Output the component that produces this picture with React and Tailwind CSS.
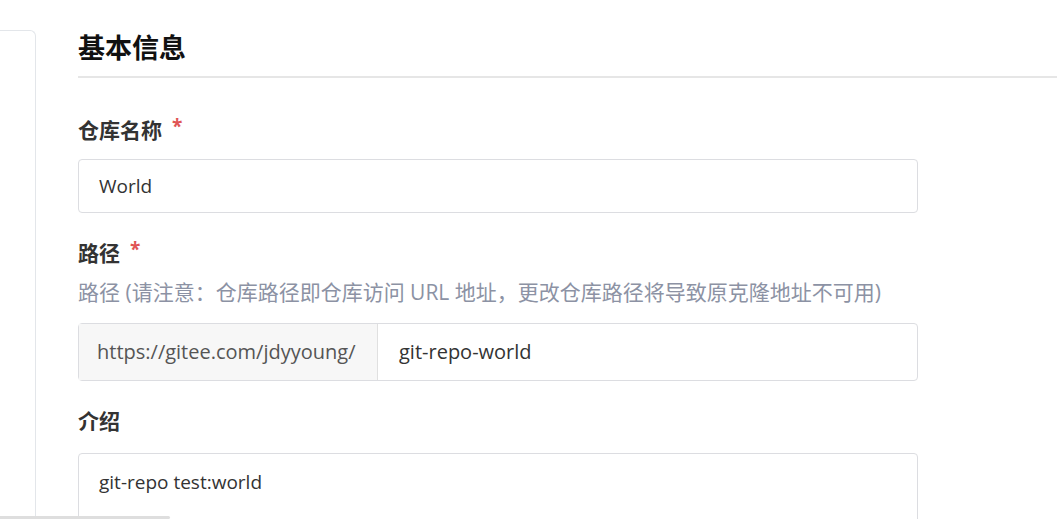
export default function App() {
  const font = { fontFamily: '"Open Sans", "Noto Sans CJK SC", "Noto Sans", sans-serif' };
  return (
    <div className="relative flex h-[519px] w-[1057px] overflow-hidden bg-white" style={font}>
      <div className="mt-[30px] h-[600px] w-[36px] shrink-0 rounded-tr-[6px] border-t border-r border-[#e3e6ea]" />
      <div className="ml-[42px] flex-1">
        <div className="h-[78px] border-b-2 border-[#e6e6e6] pt-[30px]">
          <h1 className="text-[27px] font-bold leading-[36px] text-[#111]">基本信息</h1>
        </div>

        <div className="w-[840px]">
          <div className="mt-[38px] flex items-start text-[21px] font-bold leading-[28px] text-[#333]">
            仓库名称
            <span className="ml-[10px] mt-[2px] text-[19px] leading-[16px] text-[#e05555]">*</span>
          </div>
          <div className="mt-[15px] flex h-[54px] items-center rounded-[4px] border border-[#dcdde1] px-[20px] text-[19px] text-[#333]">
            World
          </div>

          <div className="mt-[26px] flex items-start text-[21px] font-bold leading-[28px] text-[#333]">
            路径
            <span className="ml-[10px] mt-[2px] text-[19px] leading-[16px] text-[#e05555]">*</span>
          </div>
          <div className="mt-[11px] whitespace-nowrap text-[21px] leading-[28px] text-[#8c92a4]">
            路径 (请注意：仓库路径即仓库访问 URL 地址，更改仓库路径将导致原克隆地址不可用)
          </div>
          <div className="mt-[17px] flex h-[58px] rounded-[4px] border border-[#dcdde1] text-[20px]">
            <div className="flex w-[299px] items-center border-r border-[#e0e0e0] bg-[#f7f7f7] pl-[18px] text-[#555]">
              https://gitee.com/jdyyoung/
            </div>
            <div className="flex flex-1 items-center pl-[21px] text-[#333]">git-repo-world</div>
          </div>

          <div className="mt-[26px] text-[21px] font-bold leading-[28px] text-[#333]">介绍</div>
          <div className="mt-[18px] h-[120px] rounded-[4px] border border-[#dcdde1] px-[20px] pt-[14px] text-[19px] leading-[28px] text-[#333]">
            git-repo test:world
          </div>
        </div>
      </div>
      <div className="absolute bottom-0 left-0 h-[3px] w-[170px] rounded-r-[2px] bg-[#dedede]" />
    </div>
  );
}
